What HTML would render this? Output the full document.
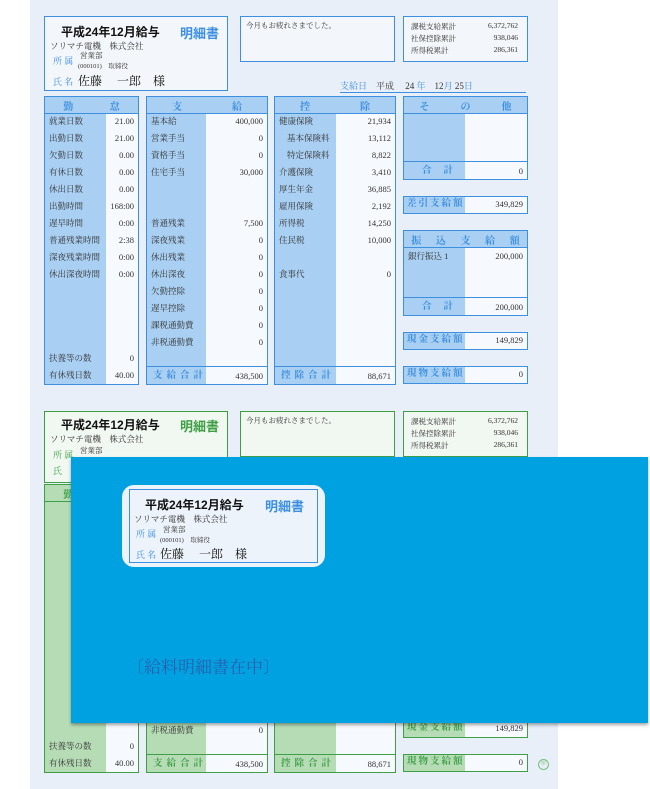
<!DOCTYPE html>
<html><head><meta charset="utf-8"><style>
*{margin:0;padding:0;box-sizing:border-box}
body{width:650px;height:789px;background:#fff;position:relative;overflow:hidden;font-family:"Liberation Serif","Noto Serif CJK JP",serif;color:#333}
.paper{position:absolute;left:30px;top:0;width:528px;height:789px;background:#e8eff8}
.s{position:absolute;left:0;width:650px;height:395px}
.b{position:absolute;border:1.5px solid #3d8fe0;background:#f3f7fc}
.g .b{border-color:#3f9f45;background:#f1f7f1}
.col{position:absolute;border:1.5px solid #3d8fe0;background:#f6f9fd;font-size:8.5px}
.g .col{border-color:#3f9f45}
.sh{position:absolute;top:0;bottom:0;left:0;background:#a9cff2}
.g .sh{background:#b6dcb6}
.hd{position:absolute;left:0;right:0;top:0;height:17px;background:#a9cff2;border-bottom:1.5px solid #3d8fe0;color:#3d8fe0;font-size:10px;font-weight:bold;display:flex;justify-content:space-around;align-items:center}
.g .hd{background:#b6dcb6;border-color:#3f9f45;color:#3f9f45}
.r{position:absolute;left:0;right:0;height:17px;line-height:17px}
.r .l{position:absolute;left:4px}
.r .v{position:absolute;right:4px}
.ft{position:absolute;left:0;right:0;bottom:0;height:18px;line-height:18px;border-top:1.5px solid #3d8fe0}
.g .ft{border-color:#3f9f45}
.ft .l{position:absolute;left:6px;color:#3d8fe0;font-weight:bold;font-size:9.5px;letter-spacing:4px}
.g .ft .l{color:#3f9f45}
.ft .v{position:absolute;right:4px}
.bl{color:#3d8fe0}.g .bl{color:#3f9f45}
.t{position:absolute;white-space:nowrap}
</style></head><body>
<div class="paper"></div>

<div class="s" style="top:0">
<div class="b" style="left:44px;top:16px;width:184px;height:75px">
 <div class="t" style="left:16px;top:6px;font-family:'Liberation Sans','Noto Sans CJK JP',sans-serif;font-weight:bold;font-size:12px;color:#111">平成24年12月給与</div>
 <div class="t bl" style="left:135px;top:6px;font-family:'Liberation Sans','Noto Sans CJK JP',sans-serif;font-weight:bold;font-size:13px">明細書</div>
 <div class="t" style="left:5px;top:23px;font-size:8.5px">ソリマチ電機　株式会社</div>
 <div class="t bl" style="left:8px;top:37px;font-size:9px">所 属</div>
 <div class="t" style="left:35px;top:33px;font-size:7.5px">営業部</div>
 <div class="t" style="left:33px;top:44px;font-size:6.5px">(000101)　取締役</div>
 <div class="t bl" style="left:8px;top:58px;font-size:9px">氏 名</div>
 <div class="t" style="left:33px;top:55px;font-size:12px;color:#111">佐藤　 一郎　様</div>
</div>
<div class="b" style="left:240px;top:16px;width:155px;height:46px"><div class="t" style="left:5px;top:3px;font-size:7.5px">今月もお疲れさまでした。</div></div>
<div class="b" style="left:403px;top:16px;width:125px;height:46px;font-size:7.5px">
 <div class="t" style="left:7px;top:4px">課税支給累計</div><div class="t" style="right:9px;top:4px">6,372,762</div>
 <div class="t" style="left:7px;top:16px">社保控除累計</div><div class="t" style="right:9px;top:16px">938,046</div>
 <div class="t" style="left:7px;top:28px">所得税累計</div><div class="t" style="right:9px;top:28px">286,361</div>
</div>
<div class="t" style="left:340px;top:79px;font-size:9px;border-bottom:1px solid #3d8fe0;width:186px"><span class="bl">支給日</span>　平成　 24 <span class="bl">年</span>　12<span class="bl">月</span> 25<span class="bl">日</span></div>

<div class="col" style="left:44px;top:96px;width:95px;height:289px">
 <div class="sh" style="width:61px"></div><div class="hd"><span>勤</span><span>怠</span></div>
 <div class="r" style="top:16px"><span class="l">就業日数</span><span class="v">21.00</span></div>
 <div class="r" style="top:33px"><span class="l">出勤日数</span><span class="v">21.00</span></div>
 <div class="r" style="top:50px"><span class="l">欠勤日数</span><span class="v">0.00</span></div>
 <div class="r" style="top:67px"><span class="l">有休日数</span><span class="v">0.00</span></div>
 <div class="r" style="top:84px"><span class="l">休出日数</span><span class="v">0.00</span></div>
 <div class="r" style="top:101px"><span class="l">出勤時間</span><span class="v">168:00</span></div>
 <div class="r" style="top:118px"><span class="l">遅早時間</span><span class="v">0:00</span></div>
 <div class="r" style="top:135px"><span class="l">普通残業時間</span><span class="v">2:38</span></div>
 <div class="r" style="top:152px"><span class="l">深夜残業時間</span><span class="v">0:00</span></div>
 <div class="r" style="top:169px"><span class="l">休出深夜時間</span><span class="v">0:00</span></div>
 <div class="r" style="top:253px"><span class="l">扶養等の数</span><span class="v">0</span></div>
 <div class="r" style="top:270px"><span class="l">有休残日数</span><span class="v">40.00</span></div>
</div>

<div class="col" style="left:146px;top:96px;width:122px;height:289px">
 <div class="sh" style="width:59px"></div><div class="hd"><span>支</span><span>給</span></div>
 <div class="r" style="top:16px"><span class="l">基本給</span><span class="v">400,000</span></div>
 <div class="r" style="top:33px"><span class="l">営業手当</span><span class="v">0</span></div>
 <div class="r" style="top:50px"><span class="l">資格手当</span><span class="v">0</span></div>
 <div class="r" style="top:67px"><span class="l">住宅手当</span><span class="v">30,000</span></div>
 <div class="r" style="top:118px"><span class="l">普通残業</span><span class="v">7,500</span></div>
 <div class="r" style="top:135px"><span class="l">深夜残業</span><span class="v">0</span></div>
 <div class="r" style="top:152px"><span class="l">休出残業</span><span class="v">0</span></div>
 <div class="r" style="top:169px"><span class="l">休出深夜</span><span class="v">0</span></div>
 <div class="r" style="top:186px"><span class="l">欠勤控除</span><span class="v">0</span></div>
 <div class="r" style="top:203px"><span class="l">遅早控除</span><span class="v">0</span></div>
 <div class="r" style="top:220px"><span class="l">課税通勤費</span><span class="v">0</span></div>
 <div class="r" style="top:237px"><span class="l">非税通勤費</span><span class="v">0</span></div>
 <div class="ft"><span class="l">支給合計</span><span class="v">438,500</span></div>
</div>

<div class="col" style="left:274px;top:96px;width:122px;height:289px">
 <div class="sh" style="width:61px"></div><div class="hd"><span>控</span><span>除</span></div>
 <div class="r" style="top:16px"><span class="l">健康保険</span><span class="v">21,934</span></div>
 <div class="r" style="top:33px"><span class="l" style="left:12px">基本保険料</span><span class="v">13,112</span></div>
 <div class="r" style="top:50px"><span class="l" style="left:12px">特定保険料</span><span class="v">8,822</span></div>
 <div class="r" style="top:67px"><span class="l">介護保険</span><span class="v">3,410</span></div>
 <div class="r" style="top:84px"><span class="l">厚生年金</span><span class="v">36,885</span></div>
 <div class="r" style="top:101px"><span class="l">雇用保険</span><span class="v">2,192</span></div>
 <div class="r" style="top:118px"><span class="l">所得税</span><span class="v">14,250</span></div>
 <div class="r" style="top:135px"><span class="l">住民税</span><span class="v">10,000</span></div>
 <div class="r" style="top:169px"><span class="l">食事代</span><span class="v">0</span></div>
 <div class="ft"><span class="l">控除合計</span><span class="v">88,671</span></div>
</div>

<div class="col" style="left:403px;top:96px;width:125px;height:84px">
 <div class="sh" style="width:61px"></div><div class="hd"><span>そ</span><span>の</span><span>他</span></div>
 <div class="ft"><span class="l" style="letter-spacing:12px;left:18px">合計</span><span class="v">0</span></div>
</div>
<div class="col" style="left:403px;top:196px;width:125px;height:18px"><div class="sh" style="width:61px"></div><div class="ft" style="border:0"><span class="l" style="left:3px;letter-spacing:2px">差引支給額</span><span class="v">349,829</span></div></div>
<div class="col" style="left:403px;top:230px;width:125px;height:86px">
 <div class="sh" style="width:61px"></div><div class="hd"><span>振</span><span>込</span><span>支</span><span>給</span><span>額</span></div>
 <div class="r" style="top:17px"><span class="l">銀行振込 1</span><span class="v">200,000</span></div>
 <div class="ft"><span class="l" style="letter-spacing:12px;left:18px">合計</span><span class="v">200,000</span></div>
</div>
<div class="col" style="left:403px;top:332px;width:125px;height:18px"><div class="sh" style="width:61px"></div><div class="ft" style="border:0"><span class="l" style="left:3px;letter-spacing:2px">現金支給額</span><span class="v">149,829</span></div></div>
<div class="col" style="left:403px;top:366px;width:125px;height:18px"><div class="sh" style="width:61px"></div><div class="ft" style="border:0"><span class="l" style="left:3px;letter-spacing:2px">現物支給額</span><span class="v">0</span></div></div>
</div>

<div class="s g" style="top:392px">
<div class="b" style="left:44px;top:19px;width:184px;height:72px">
 <div class="t" style="left:16px;top:4px;font-family:'Liberation Sans','Noto Sans CJK JP',sans-serif;font-weight:bold;font-size:12px;color:#111">平成24年12月給与</div>
 <div class="t bl" style="left:135px;top:4px;font-family:'Liberation Sans','Noto Sans CJK JP',sans-serif;font-weight:bold;font-size:13px">明細書</div>
 <div class="t" style="left:5px;top:21px;font-size:8.5px">ソリマチ電機　株式会社</div>
 <div class="t bl" style="left:8px;top:36px;font-size:9px">所 属</div>
 <div class="t" style="left:35px;top:33px;font-size:7.5px">営業部</div>
 <div class="t bl" style="left:8px;top:52px;font-size:9px">氏</div>
</div>
<div class="b" style="left:240px;top:19px;width:155px;height:46px"><div class="t" style="left:5px;top:3px;font-size:7.5px">今月もお疲れさまでした。</div></div>
<div class="b" style="left:403px;top:19px;width:125px;height:46px;font-size:7.5px">
 <div class="t" style="left:7px;top:4px">課税支給累計</div><div class="t" style="right:9px;top:4px">6,372,762</div>
 <div class="t" style="left:7px;top:16px">社保控除累計</div><div class="t" style="right:9px;top:16px">938,046</div>
 <div class="t" style="left:7px;top:28px">所得税累計</div><div class="t" style="right:9px;top:28px">286,361</div>
</div>
<div class="col" style="left:44px;top:92px;width:95px;height:289px">
 <div class="sh" style="width:61px"></div><div class="hd"><span>勤</span><span>怠</span></div>
 <div class="r" style="top:253px"><span class="l">扶養等の数</span><span class="v">0</span></div>
 <div class="r" style="top:270px"><span class="l">有休残日数</span><span class="v">40.00</span></div>
</div>
<div class="col" style="left:146px;top:92px;width:122px;height:289px">
 <div class="sh" style="width:59px"></div>
 <div class="r" style="top:237px"><span class="l">非税通勤費</span><span class="v">0</span></div>
 <div class="ft"><span class="l">支給合計</span><span class="v">438,500</span></div>
</div>
<div class="col" style="left:274px;top:92px;width:122px;height:289px">
 <div class="sh" style="width:61px"></div>
 <div class="ft"><span class="l">控除合計</span><span class="v">88,671</span></div>
</div>
<div class="col" style="left:403px;top:328px;width:125px;height:18px"><div class="sh" style="width:61px"></div><div class="ft" style="border:0"><span class="l" style="left:3px;letter-spacing:2px">現金支給額</span><span class="v">149,829</span></div></div>
<div class="col" style="left:403px;top:362px;width:125px;height:18px"><div class="sh" style="width:61px"></div><div class="ft" style="border:0"><span class="l" style="left:3px;letter-spacing:2px">現物支給額</span><span class="v">0</span></div></div>
<div class="t" style="left:538px;top:367px;width:11px;height:11px;border:1px solid #7bbf7b;border-radius:50%;font-size:6px;color:#7bbf7b;text-align:center;line-height:9px">㊞</div>
</div>

<div style="position:absolute;left:71px;top:457px;width:577px;height:266px;background:#00a1e1;box-shadow:0 2px 3px rgba(0,0,0,.35)">
 <div style="position:absolute;left:51px;top:28px;width:203px;height:82px;background:#edf3fb;border-radius:12px">
  <div style="position:absolute;left:7px;top:4px;width:189px;height:74px;border:1.5px solid #3d8fe0">
   <div class="t" style="left:15px;top:6px;font-family:'Liberation Sans','Noto Sans CJK JP',sans-serif;font-weight:bold;font-size:12px;color:#111">平成24年12月給与</div>
   <div class="t" style="left:135px;top:6px;font-family:'Liberation Sans','Noto Sans CJK JP',sans-serif;font-weight:bold;font-size:13px;color:#3d8fe0">明細書</div>
   <div class="t" style="left:4px;top:23px;font-size:8.5px">ソリマチ電機　株式会社</div>
   <div class="t" style="left:6px;top:37px;font-size:9px;color:#3d8fe0">所 属</div>
   <div class="t" style="left:33px;top:34px;font-size:7.5px">営業部</div>
   <div class="t" style="left:30px;top:45px;font-size:6.5px">(000101)　取締役</div>
   <div class="t" style="left:6px;top:58px;font-size:9px;color:#3d8fe0">氏 名</div>
   <div class="t" style="left:30px;top:55px;font-size:12px;color:#111">佐藤　 一郎　様</div>
  </div>
 </div>
 <div class="t" style="left:56px;top:196px;font-size:17px;color:#2a5fae">〔給料明細書在中〕</div>
</div>
</body></html>
